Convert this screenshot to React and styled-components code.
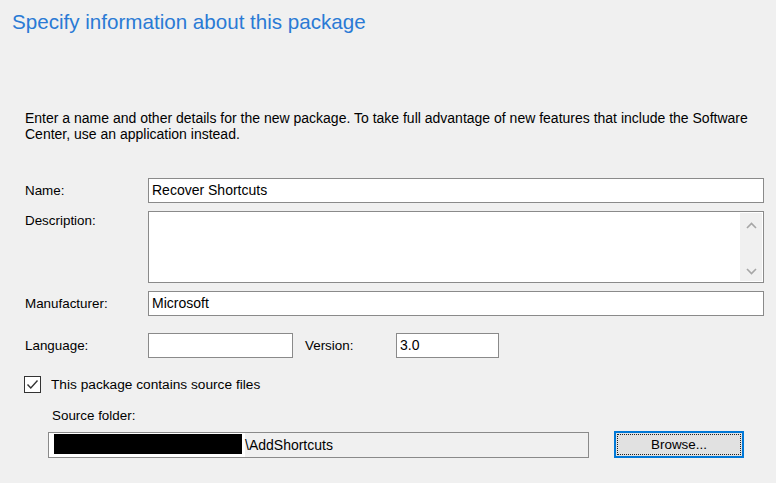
import React from 'react'
import styled, { createGlobalStyle } from 'styled-components'

const GlobalStyle = createGlobalStyle`
  html, body {
    margin:       0;
    padding:      0;
    background:   #f0f0f0;
  }
`

const Window = styled.div`
  width:          776px;
  height:         483px;
  box-sizing:     border-box;
  background:     #f0f0f0;
  font-family:    "Liberation Sans", Arial, sans-serif;
  font-size:      13.4px;
  color:          #000;
  overflow:       hidden;
`

const Title = styled.h1`
  margin:         0;
  padding:        9px 0 0 12px;
  font-size:      20.6px;
  line-height:    26px;
  font-weight:    normal;
  color:          #2a7ad5;
`

const Content = styled.div`
  padding:        75px 12px 0 25px;
`

const Intro = styled.p`
  margin:         0;
  font-size:      14px;
  line-height:    16px;
  width:          740px;
`

const Form = styled.div`
  margin-top:     36px;
  display:        flex;
  flex-direction: column;
`

const Row = styled.div`
  display:        grid;
  grid-template-columns: 123px 1fr;
  align-items:    ${p => (p.$top ? 'start' : 'center')};
  margin-top:     ${p => p.$gap || 0}px;
`

const Label = styled.label`
  line-height:    16px;
  padding-top:    ${p => p.$pad || 0}px;
`

const TextBox = styled.div`
  box-sizing:     border-box;
  height:         ${p => p.$h || 25}px;
  width:          ${p => (p.$w ? `${p.$w}px` : 'auto')};
  border:         1px solid #8a8a8a;
  background:     ${p => (p.$readonly ? '#f0f0f0' : '#fff')};
  padding:        0 3px;
  font-size:      14px;
  line-height:    23px;
  display:        flex;
  align-items:    center;
  white-space:    nowrap;
`

const MemoBox = styled.div`
  box-sizing:     border-box;
  height:         72px;
  border:         1px solid #8a8a8a;
  background:     #fff;
  display:        flex;
  justify-content: flex-end;
  padding:        1px;
`

const ScrollBar = styled.div`
  width:          22px;
  background:     #f0f0f0;
  display:        flex;
  flex-direction: column;
  justify-content: space-between;
  align-items:    center;
  padding:        9px 0 6px;
`

const Inline = styled.div`
  display:        flex;
  align-items:    center;
`

const SubLabel = styled.span`
  width:          91px;
  padding-left:   12px;
`

const CheckRow = styled.label`
  display:        flex;
  align-items:    center;
  margin-top:     18px;
  margin-left:    -1px;
  gap:            10px;
  font-size:      13.7px;
`

const CheckBox = styled.span`
  box-sizing:     border-box;
  width:          17px;
  height:         17px;
  border:         1px solid #333;
  background:     #fff;
  display:        flex;
  align-items:    center;
  justify-content: center;
`

const Indented = styled.div`
  padding-left:   23px;
`

const FolderLabel = styled.div`
  margin-top:     15px;
  padding-left:   4px;
  line-height:    16px;
`

const SourceRow = styled.div`
  margin-top:     8px;
  display:        flex;
  align-items:    center;
  gap:            25px;
`

const Redacted = styled.span`
  box-sizing:     border-box;
  width:          196px;
  height:         24px;
  margin-left:    -3px;
  padding:        1px 3px 3px 5px;
  background:     #fff;
  display:        flex;
  &::after {
    content:      '';
    flex:         1;
    background:   #000;
  }
`

const Button = styled.button`
  box-sizing:     border-box;
  width:          130px;
  height:         27px;
  margin-top:     -1px;
  border:         2px solid #0078d7;
  background:     #e1e1e1;
  padding:        1px;
  font:           inherit;
  color:          #000;
  cursor:         pointer;

  span {
    display:      flex;
    align-items:  center;
    justify-content: center;
    height:       100%;
    border:       1px dotted #222;
    box-sizing:   border-box;
  }
`

const Chevron = ({ up }) => (
  <svg width="11" height="7" viewBox="0 0 11 7">
    <path
      d={up ? 'M1 6 L5.5 1.5 L10 6' : 'M1 1 L5.5 5.5 L10 1'}
      fill="none"
      stroke="#a6a6a6"
      strokeWidth="1.6"
    />
  </svg>
)

export default function App() {
  return (
    <Window>
      <GlobalStyle />
      <Title>Specify information about this package</Title>
      <Content>
        <Intro>
          Enter a name and other details for the new package. To take full advantage of new features that include the Software Center, use an application instead.
        </Intro>
        <Form>
          <Row>
            <Label>Name:</Label>
            <TextBox>Recover Shortcuts</TextBox>
          </Row>
          <Row $top $gap={8}>
            <Label $pad={2}>Description:</Label>
            <MemoBox>
              <ScrollBar>
                <Chevron up />
                <Chevron />
              </ScrollBar>
            </MemoBox>
          </Row>
          <Row $gap={8}>
            <Label>Manufacturer:</Label>
            <TextBox>Microsoft</TextBox>
          </Row>
          <Row $gap={17}>
            <Label>Language:</Label>
            <Inline>
              <TextBox $w={145} />
              <SubLabel>Version:</SubLabel>
              <TextBox $w={103}>3.0</TextBox>
            </Inline>
          </Row>
          <CheckRow>
            <CheckBox>
              <svg width="13" height="11" viewBox="0 0 13 11">
                <path d="M1.5 5.5 L4.8 9 L11.5 1.5" fill="none" stroke="#333" strokeWidth="1.4" />
              </svg>
            </CheckBox>
            This package contains source files
          </CheckRow>
          <Indented>
            <FolderLabel>Source folder:</FolderLabel>
            <SourceRow>
              <TextBox $w={541} $h={26} $readonly>
                <Redacted />
                \AddShortcuts
              </TextBox>
              <Button><span>Browse...</span></Button>
            </SourceRow>
          </Indented>
        </Form>
      </Content>
    </Window>
  )
}
